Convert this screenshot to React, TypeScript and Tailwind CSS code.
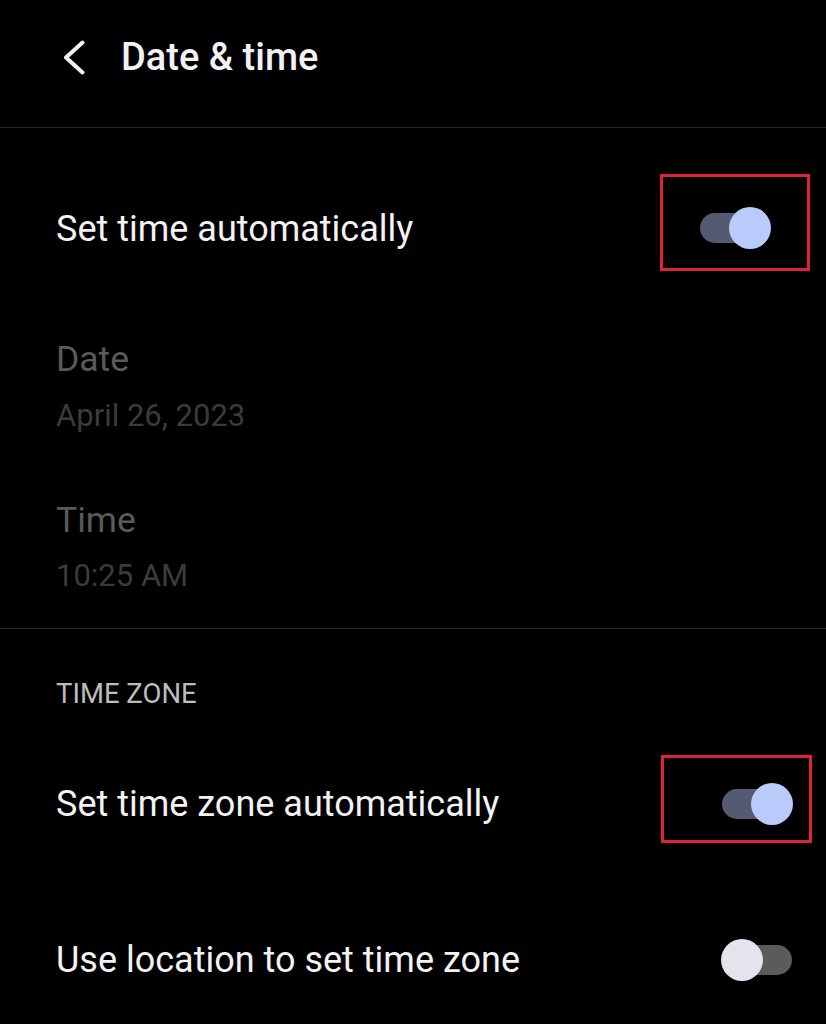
import React from "react";

function Toggle({ on }: { on: boolean }) {
  return (
    <div className="relative w-[71px] h-[42px] shrink-0">
      {on ? (
        <>
          <div className="absolute left-0 top-[6px] w-[66px] h-[30px] rounded-full bg-[#545a72]" />
          <div className="absolute left-[29px] top-0 w-[42px] h-[42px] rounded-full bg-[#b9cbfb]" />
        </>
      ) : (
        <>
          <div className="absolute left-[5px] top-[6px] w-[66px] h-[30px] rounded-full bg-[#5b5b5d]" />
          <div className="absolute left-0 top-0 w-[42px] h-[42px] rounded-full bg-[#e3e4ec]" />
        </>
      )}
    </div>
  );
}

export default function App() {
  return (
    <div
      className="w-[826px] h-[1024px] bg-black text-[#f2f2f2] overflow-hidden"
      style={{ fontFamily: "Roboto, 'Noto Sans', sans-serif" }}
    >
      {/* Header */}
      <div className="h-[128px] flex items-center pl-[63px] pb-[13px] border-b border-[#262626]">
        <svg width="22" height="35" viewBox="0 0 22 35" className="shrink-0">
          <polyline
            points="19.5,2.5 3,17.5 19.5,32.5"
            fill="none"
            stroke="#f2f2f2"
            strokeWidth="4"
            strokeLinecap="round"
            strokeLinejoin="round"
          />
        </svg>
        <div className="ml-[36px] text-[38px] leading-none font-medium">Date &amp; time</div>
      </div>

      {/* Set time automatically */}
      <div className="flex items-center justify-between pl-[56px] pr-[16px] mt-[46px]">
        <div className="text-[36px] leading-none mt-[13px]">Set time automatically</div>
        <div className="w-[150px] h-[97px] border-[3px] border-[#e0213a] flex items-center justify-center pt-[10px]">
          <Toggle on />
        </div>
      </div>

      {/* Date / Time */}
      <div className="pl-[56px]">
        <div className="mt-[71px] text-[35.5px] leading-none text-[#5a5a5a]">Date</div>
        <div className="mt-[22px] text-[31px] leading-none text-[#3b3b3b]">April 26, 2023</div>
        <div className="mt-[72px] text-[35.5px] leading-none text-[#5a5a5a]">Time</div>
        <div className="mt-[22px] text-[31px] leading-none text-[#3b3b3b]">10:25 AM</div>
      </div>

      <div className="mt-[37px] h-px bg-[#262626]" />

      {/* Time zone */}
      <div className="pl-[56px] mt-[51px] text-[27.5px] leading-none text-[#bdbdbd]">TIME ZONE</div>

      <div className="flex items-center justify-between pl-[56px] pr-[14px] mt-[47px]">
        <div className="text-[36px] leading-none mt-[10px]">Set time zone automatically</div>
        <div className="w-[151px] h-[88px] border-[3px] border-[#e0213a] flex items-start pl-[58px] pt-[25px]">
          <Toggle on />
        </div>
      </div>

      <div className="flex items-center justify-between pl-[56px] pr-[34px] mt-[96px]">
        <div className="text-[36px] leading-none">Use location to set time zone</div>
        <Toggle on={false} />
      </div>
    </div>
  );
}
